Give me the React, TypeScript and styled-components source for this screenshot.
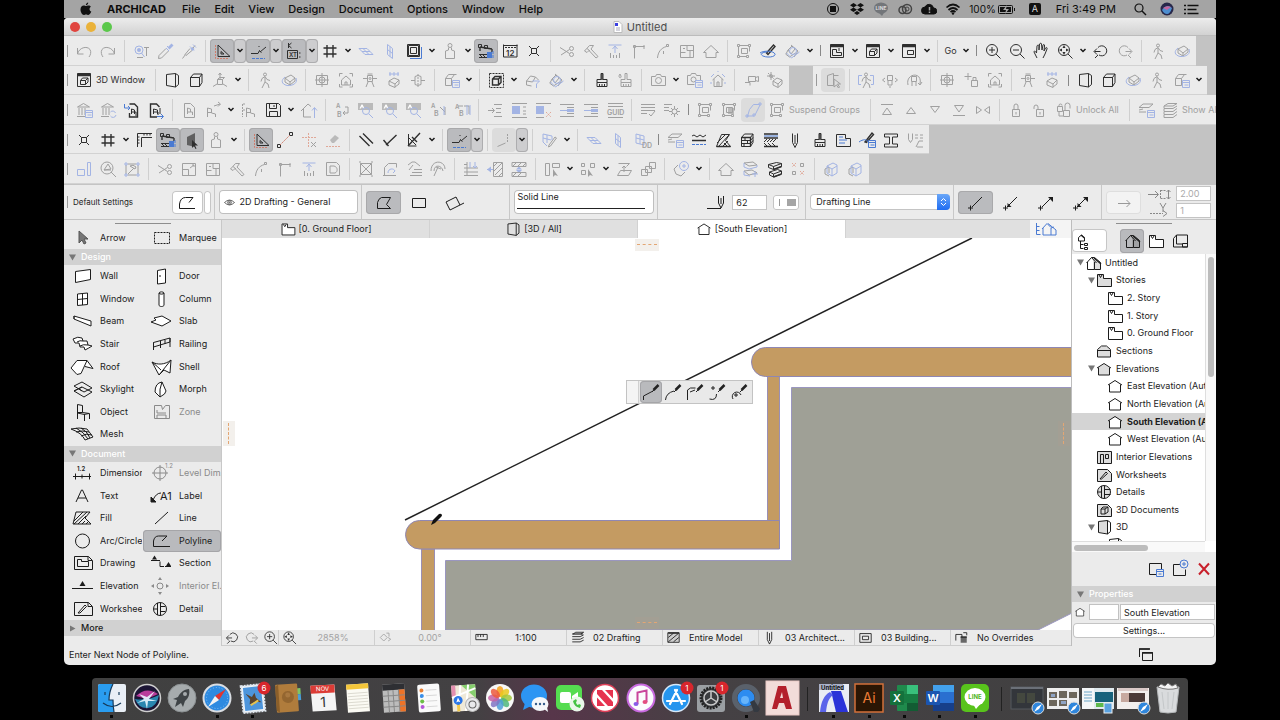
import React from 'react';
import styled, { createGlobalStyle, css } from 'styled-components';

const Global = createGlobalStyle`
  *, *::before, *::after { box-sizing: border-box; }
  body { margin: 0; background: #000; font-family: Inter, "Liberation Sans", sans-serif; font-size: 9px; line-height: 12px; color: #1c1c1c; }
  button, input, select { font: inherit; color: inherit; margin: 0; padding: 0; border: 0; background: none; }
  ul, nav, h2 { margin: 0; padding: 0; list-style: none; font: inherit; }
  svg { display: block; flex: none; }
`;

/* ---------- glyph library ---------- */

/* s line, k bold line, b accent line, f solid, h accent solid, r red line, d dashed line,
   w white body, g pale body, m mid-grey body, e dashed accent line, t letters */
type Glyph = {
  w?: string; g?: string; m?: string; s?: string; k?: string; b?: string; f?: string; h?: string; r?: string; d?: string; e?: string;
  t?: [string, number, number, number][];
};

const ring = (x: number, y: number, r: number) => `M${x - r} ${y}a${r} ${r} 0 1 0 ${2 * r} 0a${r} ${r} 0 1 0 ${-2 * r} 0`;
const box = (x: number, y: number, w: number, h: number) => `M${x} ${y}h${w}v${h}h${-w}z`;

const PERSON = ring(12, 6.5, 1.5) + 'M12 8.5l-3 2-1 3M12 8.5l2 3 3 1M12 9v5l3 2 1 4M12 14l-3 6';
const CUBE = 'M6.500 9.500l3-3.500h8.500l-2.500 3.500zM6.500 9.500h9v9h-9zM15.500 18.500l2.500-4V6';
const ROOM = 'M6.500 6.500l9-1 3 2v9l-3 2.500-9-1.500zM15.500 5.500v13.500';
const STORY = 'M5.500 6.500h6v4h8v8h-14zM7 7l1.500 2.500L10 7';
const LENS = ring(11, 11, 5.5) + 'M15 15l4.500 4.500';
const HOUSE = 'M4.500 13.500l7.500-7 7.500 7h-2.500v5h-10v-5z';
const GABLE = 'M5 11l7-4.500 7 4.500M6.500 10.500v7.500h11v-7.500';
const GROUP = box(5.5, 5.5, 2, 2) + box(16.5, 5.5, 2, 2) + box(5.5, 16.5, 2, 2) + box(14.5, 16.5, 2, 2) + 'M7.500 6.500h9M6.500 7.500v9M7.500 17.500h7M17.500 7.500v5' + box(9.5, 9.5, 6, 5);
const SCISSORS = ring(16.5, 15.5, 2) + ring(16.5, 9.5, 2) + 'M14.500 14.500L5 8.500M14.500 10.500L6 16';
const BRUSH = 'M12 5.500h2v6h4v3h-10v-3h4zM8 14.500v4h10v-4M10.500 16v2M13 16v2M15.500 16v2';
const CAMERA = 'M5.500 8.500h4l1-2h4l1 2h4v9h-14z' + ring(12.5, 12.5, 3);
const BADGE = box(13.5, 12.5, 7, 7) + 'M13.500 14.500h7M15.500 17h4';
const ORBIT = 'M8 10l6-3 4 3-5 4zM8 10v4l5 3v-3M18 10v3l-5 4';
const ORBIT_B = 'M8 9C4 12 4 16 10 17.500C16 18 21 15 19 10';
const PARALLEL = 'M5 9.500h8l6 6h-8zM9 9.500l6 6M8 12.500h8';
const UPRIGHT = 'M9.500 5.500l5 4v10l-5-4zM12 7.500v10M9.500 10.500l5 4';
const ARC = 'M6.500 19C7 13 10 9 15.500 7.500' + box(15.5, 5.5, 2, 2) + 'M12.500 12v3';
const TRISTAR = 'M8 11l4-4 3 3-4 5zM5.500 15l4 3 6-4M11 6l7 6-4 6M8 11l-2 4';
const PAPER = 'M7.500 5.500h6l4 4v10h-10z';
const LOCKBODY = box(8.5, 11.5, 7, 7) + 'M12 14v2.500';
const TEMPLE = 'M5.500 9l6-3.500 6 3.500zM7 10v7M10 10v7M13 10v7M5 18.500h8';

const G: Record<string, Glyph> = {
  undo: { s: 'M5.500 9v6h6M5.500 15C7 8.500 15 6.500 18 10.500C19.500 13 18.500 16 17 18' },
  redo: { s: 'M18.500 9v6h-6M18.500 15C17 8.500 9 6.500 6 10.500C4.500 13 5.500 16 7 18' },
  findsel: { b: ring(10, 11, 4) + 'M12.500 14l3 4', h: ring(10, 11, 2), s: 'M15 8.500h5M17.500 9v8M8 18.500h6' },
  pipette: { b: 'M14 7l3 3M13 9l3 3', h: 'M14.500 8.500l4-4 2 2-4 4z', s: 'M13 9.500l-7 7-.5 3 3-.5 7-7' },
  syringe: { b: 'M13 7.500l4 4M16 5.500l3 3', h: 'M13.500 10l2-2 2 2-2 2z', s: 'M13 9.500l-5 6 1 1 6-5M8.500 15.500l-3 4M16 9l2-2.500' },
  setsq: { s: 'M8 6V17.500H20zM11 12.500v2.500h3z', r: 'M5.500 6v13.500H19' },
  snap: { s: 'M5 14.500h7l1.500-3M13 11.500l2.500 2M14 13l6-5M13 8v-1', e: 'M6 19.500h13' },
  xybox: { s: box(5.5, 11.5, 10, 8) + 'M6.500 4v5M6.500 6.500l3-2.500M6.500 6.500l3 2.500M17 14h1.500M17 18h1.500', t: [['XT', 7, 18, 6]] },
  grid: { k: 'M9 6v12.500M15 6v12.500M5.500 9h13M5.500 15h13' },
  plane: { b: PARALLEL },
  upright: { b: UPRIGHT },
  planeDD: { b: 'M6 6l8 2v9l-8-2zM10 7v9M6 10l8 2', t: [['DD', 12, 20, 7]] },
  frame: { b: 'M8 19.500h11.500V8', s: box(5.5, 5.5, 12, 12) + box(6.5, 6.5, 10, 10) + box(8.5, 8.5, 6, 6) },
  weight: { s: ring(12, 6.5, 2) + 'M10.500 8.500v2.500l-3 1v7.500h9v-7.500l-3-1v-2.500' },
  bridge: { k: 'M6 8l12 2M6 8v4M18 10v3', s: box(4.5, 5.5, 3, 3) + box(10.5, 6.5, 3, 3) + 'M5 15.500h8M5 18.500h8M6 16l2 2M9 16l2 2', h: 'M13 13h5v6h-5z', e: 'M19 12v8' },
  ruler: { s: 'M5.500 5.500v12.500h13.500V5.500M5.500 6.500h14', d: 'M7 8.500h12', t: [['12', 8, 17, 8]] },
  cross: { s: 'M7 7l2.500 2.500M17 7l-2.500 2.500M7 17l2.500-2.500M17 17l-2.500-2.500' + box(9.5, 9.5, 5, 5) },
  scissors: { s: SCISSORS },
  hammer: { s: 'M5.500 12l5-5.500h4l-2.500 3.500 7 7.500-2 1.500-7-7.500-2 2zM8 9.500l3 2.500' },
  comb: { b: 'M5.500 6h13M12 8v6M9.500 10l2.500-3 2.500 3', s: 'M7.500 14v5M10.500 16v3M13.500 16v3M16.500 14v5' },
  corner: { s: 'M7.500 19.500V7.500h10' + box(6.5, 6.5, 2, 2) + 'M17 6v4' },
  fillet: { s: ARC },
  floorsplit: { s: box(5.5, 6.5, 13, 12) + 'M12 6.500v5h6.500M5.500 13.500h5M15 12v7M8 9.500h2' },
  home: { s: HOUSE },
  group: { s: GROUP },
  editpen: { b: 'M4 14c4-3 14-2 15 1s-8 4-12 2 0-4 4-4', k: 'M10.500 14l7-8 1.500 1.500-7 8z' },
  trace: { s: TRISTAR, b: ring(13, 12, 3.5) + 'M6.500 14l5 5 8-6' },
  winplan: { k: 'M5 6.500h14M5 7.500h14', s: box(5.5, 5.5, 13, 13) + 'M7.500 10.500h4v3h5v3h-9zM14 9v3' },
  wincube: { k: 'M5 6.500h14M5 7.500h14', s: box(5.5, 5.5, 13, 13) + 'M8.500 12.500l2-2.500h5.500l-2.500 2.500zM8.500 12.500v4h5v-4M13.500 16.500l2.500-2.500v-4' },
  winlayout: { k: 'M5 6.500h14M5 7.500h14', s: box(5.5, 5.5, 13, 13) + box(10.5, 11.5, 6, 4) },
  zoomin: { s: LENS + 'M11 8v6M8 11h6' },
  zoomout: { s: LENS + 'M8 11h6' },
  hand: { s: 'M8 19l-3-6c0-1.500 1.500-1 2.500 1l.5-7c.5-1.500 2-1 2 0v4l.5-6c.5-1 2-1 2 0l.5 6 1-5c.5-1 2-.5 1.500 1l-.5 5 1.500-3c.8-1 2-.5 1.500 1l-2 5-2 4' },
  zoomfit: { s: LENS, f: 'M11 6l1.500 3h-3zM11 16l1.500-3h-3zM6 11l3-1.500v3zM16 11l-3-1.500v3z' },
  zoomprev: { s: 'M9 8.500a5 5 0 1 1 1 7.500M9 16l-3 3M5.500 12.500h6M8 9.500l-3 3 3 3' },
  zoomnext: { s: 'M15 8.500a5 5 0 1 0-1 7.500M15 16l3 3M12.500 12.500h6M16 9.500l3 3-3 3' },
  walk: { s: PERSON },
  orbit: { s: ORBIT, b: ORBIT_B },
  room: { s: ROOM },
  cube: { s: CUBE },
  axes: { s: box(9.5, 11.5, 5, 5) + 'M12 11V5M10.500 7L12 5l1.500 2M9 16l-4 2.500M15 16l4 2.500M9.500 11.500l2-2h5l-2 2' },
  target: { s: box(6.5, 7.5, 11, 9) + 'M12 5v14M5 12h14' + ring(12, 12, 3) },
  bracketHome: { s: 'M5.500 8.500v-3h3M15.500 5.500h3v3M18.500 16v3h-3M8.500 19h-3v-3M7.500 12l4.500-4 4.500 4v5h-9zM11 17v-3h2v3' },
  tripod: { s: box(9.5, 7.5, 5, 6) + 'M9.500 6h5M5 10.500h4M15 10.500h4M10 14l-2 5M14 14l2 5' + ring(12, 10.5, 1) },
  rays: { b: 'M7 6h10M8 4v4M12 4v4M16 4v4', s: 'M7 13l5-3 5 2-4 4zM7 13v4l6 2.500v-3.500M17 12v4l-4 3' },
  flip: { s: 'M9 8.500q3-2 6 0v8q-3 2-6 0zM5 12.500h4M15 12.500h4', d: 'M12 6v13' },
  cubelist: { s: 'M6.500 10.500l3-4h8M6.500 10.500h6v7h-6zM12.500 10.500l3-4', b: BADGE },
  cubemarq: { d: box(5.5, 5.5, 14, 14), k: 'M8.500 11l2.500-2.500h6v6L14.500 17h-6zM8.500 11h6v6M14.500 11L17 8.500' },
  filter3d: { s: 'M6.500 13l4-5 5 1-3 5zM6.500 13v4l5 1M15.500 9l3 3', b: 'M12.500 13h7l-3 3v4' },
  brush: { k: 'M13 5v7', s: BRUSH },
  dropbrush: { s: BRUSH + 'M7 6c-3 4 2 5 1 2z' },
  camera: { s: CAMERA },
  cameralist: { s: 'M5.500 7.500h3l1-2h4l1 2h4v5M5.500 7.500v9h7' + ring(11.5, 11.5, 2.5), b: BADGE },
  homeflash: { s: 'M6.500 12l5.500-5 5.500 5M8 11v7.500h8V11M11 18v-4h2v4', b: 'M5 9l3-3M19 9l-3-3M12 4v-1M6 15h-2M20 15h-2' },
  videocam: { s: 'M9.500 8.500h7v5h-7zM16.500 9.500l3-1v5l-3-1M6 14.500h5v3' },
  suncube: { s: 'M10 13l4-3 5 2-4 4zM10 13v4l5 2.500v-3.500M19 12v4l-4 3.500' + ring(8, 8, 1.5), d: 'M8 4v8M4 8h8M5 5l6 6' },
  cursorbox: { s: 'M6.500 7.500l6-2v12h-6zM12.500 7.500h5M13 11v8l2.500-2 2 3 1-1-2-3h3z' },
  walkframe: { s: PERSON, b: 'M8 7.500H4.500v9H7M16 7.500h3.500v9H17' },
  dolly: { s: box(9.5, 7.5, 5, 5) + 'M10 13v4h4v-4M7 10l-2.500 2L7 14M17 10l2.500 2-2.500 2M11 19h2' },
  orbitcam: { s: box(9.5, 8.5, 5, 5) + 'M6 17c-3-12 15-14 12-1M16 15l2 2 2-3M10 14v4M14 14v4' },
  sparklock: { s: box(12.5, 12.5, 6, 6) + 'M14 12.500v-3h3v3M9 5v7M5.500 8.500h7' },
  temple: { s: TEMPLE, b: BADGE },
  templesync: { s: TEMPLE, b: 'M14.500 14a3 3 0 0 1 5 1M20 17a3 3 0 0 1-5.500 1' },
  hotlink1: { k: 'M9.500 6h5l3 3v10h-8v-4', b: 'M4.500 6v4h5M8 8l2 2-2 2', s: 'M11.500 16v-5l3 1v4M11 14h5v4' },
  hotlink2: { k: 'M13 19H6.500V6h6l3 3', b: 'M13 18.500h6M17 16l2.500 2.500L17 21', s: 'M9.500 16v-5l4 1v4M9 14h5v3M16 10v6' },
  paperchair: { s: PAPER + 'M10.500 16v-6l3 1v3h2v3M10.500 14h3' },
  chairout: { s: 'M6.500 19v-9l4 1v4l4 1v3M6.500 14.500h4M13 8l6-2M17 4l2.500 2L17 8.500' },
  chairlist: { d: 'M5.500 6v13', s: 'M9.500 19v-9l4 1v4l4 1v3M9.500 14.500h4M6 6h2M6 12h2' },
  floppy: { s: 'M5.500 5.500h12l2 2v11h-14zM8.500 5.500v5h7v-5M8.500 18.500v-5h8v5M13 7v2' },
  upload: { s: 'M4 13l7-7 3 2.500M14 19H6.500v-8', b: 'M17.500 20v-10M15 12.500l2.500-3 2.500 3' },
  ab1: { s: 'M15 9h3v6h-5M15 13l-2 2 2 2', t: [['A', 6, 10, 6], ['B', 7, 19, 7]] },
  abfind: { m: box(4, 5, 15, 7), b: ring(12, 13, 3.5) + 'M15 16l4 4', w: 'M5.500 10.500l2-4h1l2 4h-1.500l-1-2-1 2z' },
  ab2: { s: 'M14 9l5 5M19 9v8', b: 'M18 8v9', t: [['A', 5, 10, 6], ['B', 8, 18, 7]] },
  ab3: { s: 'M14 8h5v8M8 8h5', b: 'M17 7v10M20 7v10', t: [['A', 5, 11, 6], ['B', 9, 18, 7]] },
  indent: { s: 'M5 12.500h6M9 10l2.500 2.500L9 15M11 6.500h8M13 10.500h5M13 14.500h5M11 18.500h8' },
  paratop: { s: 'M5 5.500h15M5 19.500h15M16 9h3M16 13h3M16 16h3', h: box(5, 8, 8, 8) },
  paradel: { s: 'M5 5.500h15M5 19.500h8', h: box(5, 8, 8, 8), r: 'M15 14l5 5M20 14l-5 5' },
  parain: { s: 'M5 6.500h14M12 9.500h7M12 15.500h7M5 18.500h14', b: 'M5 12.500h8', h: box(12, 11, 7, 3) },
  guid: { s: 'M5 5.500h15M5 8.500h15M5 19.500h15', t: [['GUID', 4, 17, 7]] },
  listcheck: { s: 'M5 6.500h14M5 9.500h14M5 12.500h14M5 15.500h6M13 16l2 2 4-5' },
  listgear: { s: 'M4 6.500h8M4 9.500h5M4 12.500h5M14.500 8v3M14.500 16v3M9 13.500h3M17 13.500h3M11 10l2 2M16 15l2 2M18 10l-2 2M11 17l2-2' + ring(14.5, 13.5, 2.5) },
  groupfill: { s: GROUP, m: box(11, 10, 6, 6) },
  blueGroup: { b: 'M6.500 18.500l2-7 4-5h6M19 7l-5 10M6 18h7' + box(12, 16, 2, 2) + box(5, 17, 2, 2) + box(18, 5, 2, 2) },
  top: { s: 'M6 6.500h12M7.500 16.500L12 10l4.500 6.500z' },
  up: { s: 'M7.500 15.500L12 9.500l4.500 6z' },
  down: { s: 'M7.500 8.500L12 14.500l4.500-6z' },
  bottom: { s: 'M6 17.500h12M7.500 7.500L12 14l4.500-6.500z' },
  mirror: { s: 'M5.500 8.500v7l5-3.500zM18.500 8.500v7l-5-3.500z' },
  lock: { s: LOCKBODY + 'M10 11.500V8a2 2 0 0 1 4 0v3.500' },
  unlock: { s: LOCKBODY + 'M10 11.500V9a2 2 0 0 0-4 0v2' },
  unlockall: { s: box(11.5, 12.5, 6, 6) + box(5.5, 8.5, 5, 5) + 'M7 8.500v-1a1.500 1.500 0 0 1 3 0M13 12.500v-5a2 2 0 0 1 5 0v3M7 14v4h4' },
  layers: { s: 'M5 9.500l4-3.500h10l-4 3.500zM5 12l4-1M5 14h7', b: BADGE },
  stack: { s: 'M6 8l4-2.500h9L15 8zM6 8v2.500h9L19 8M6 11v2.500h9l4-3M6 14v2.500h9l4-3M6 17v2.500h9l4-3' },
  rulercorner: { s: 'M5.500 19V5.500H20M9.500 19V9.500H20M5.500 9h2M5.500 12h2M5.500 15h2M12 5.500v2M15 5.500v2M18 5.500v2' },
  wallcursor: { m: 'M7 9l8-4v14l-8-2z', f: 'M12 12v8l2-2 1.500 3 1-.5-1.500-3h3z' },
  guideline: { r: 'M7 17L17 7', s: box(16.5, 4.5, 3, 3) + box(4.5, 16.5, 3, 3) },
  guidecross: { r: 'M11.500 5v14M5 9.500h14', s: 'M14 14l5 5M19 14l-5 5' },
  eraser: { r: 'M5 18.500h14', m: 'M9 12l5-5 4 3-5 5h-2z' },
  par: { k: 'M5.500 8l10 10M9 5.500l10 10' },
  perp: { k: 'M5.500 12l5 6M8 17L18.500 7' },
  bisect: { s: 'M6.500 6v12h8M7 10l7 7', k: 'M6 18L18 5M10 9l5 5' },
  axis: { s: 'M5.500 18.500l8-3.500', d: 'M15.500 6v9' },
  planepen: { b: 'M6 6l9 2v4M6 6v8l4 4M10 7v8M6 10l8 2', s: 'M12 17l6-8 1.500 1-6 8-2 1z' },
  waves: { s: 'M5 8l2-1 3 2 3-2 3 2 3-2', k: 'M5 12.500h14', e: 'M5 16.500h14' },
  hatchpoly: { s: 'M5.500 18.500l5-12h8l-4 6 5 6zM8 18l10-11M12 18l5-5M6 15l9-9M16 18l-3-3', k: 'M5.500 18.500h14' },
  brick: { s: CUBE + 'M6.500 12.500h9M6.500 15.500h9M10 9.500v3M12.500 12.500v3M9 15.500v3M15.500 12.500l2.500-3M15.500 15.500l2.500-3', k: 'M6.500 9.500h9v9' },
  composite: { k: 'M5 6h14M5 10h14M5 18.500h14', b: 'M5 8h14', s: 'M5 14l3-3M8 14l3-3M11 14l3-3M14 14l3-3M5 15l3 3M9 15l3 3M13 15l3 3' },
  pen: { s: 'M9.500 5.500v9l2.500 5 2.500-5v-9M12 16v-9' },
  storyblue: { s: 'M5.500 6.500h9v4h5v8h-14z', b: 'M8 9h4M8 12h8M8 15h6' },
  penlist: { b: 'M4 14c4-3 8-3 9 0' + BADGE, k: 'M10 14l7-9 1.500 1.500-7 8z' },
  ibeam: { s: 'M5.500 6h13v3h-5v7h5v3h-13v-3h5V9h-5z' },
  penmulti: { s: 'M5.500 5.500v6l2 3 2-3v-6M12 7h3M17 7h3M12 10h3M17 10h3M13 19l3-6h4M14 19h6' },
  resizeb: { b: box(5.5, 12.5, 7, 6) + box(15.5, 5.5, 3, 13) },
  lensplay: { s: ring(11, 11, 6) + 'M15 15l5 5M8 13l4-6 3 5zM8 13h7' },
  nodehammer: { b: box(5, 6, 2, 2) + box(17, 6, 2, 2) + box(17, 17, 2, 2) + box(5, 17, 2, 2), s: 'M7.500 7h9M18 8v9M7.500 18h9M6 8v9M8 17l6-6M10 9q3-2 6 1l-1 2z' },
  resize: { s: box(5.5, 6.5, 13, 12) + box(5.5, 12.5, 6, 6) + 'M13 11l4-3M15 8h2v2' },
  rounded: { s: 'M5.500 5.500h10l3 3v10h-13zM9 9h4c4 1 4 6 1 7H9z' },
  crossbox: { s: box(6.5, 6.5, 11, 11) + 'M6.500 6.500l11 11M17.500 6.500l-11 11M5 5h2M17 5h2M5 19h2M17 19h2' },
  polymagic: { s: 'M6.500 18.500v-8l4-4h8v4M5 18.500h13', b: 'M10 16c0-5 6-5 7-2l-2 2' },
  hammerlist: { s: 'M6 8l4-3h3l5 4M11 8l-4 5M12 12.500h8M10 15.500h10M8 18.500h12' },
  hammerarc: { s: 'M5 14c0-12 14-11 14-2M8 14c0-7 8-6 9 0M12 10l-4 9M10 10l5 2' },
  dropdown1: { s: 'M5 7.500h3M5 11h14M5 15h14M5 18.500h14M8 5v14', b: 'M16 5v6M14 9l2 2 2-2M11 5v6' },
  hatchside: { s: 'M10.500 5.500h9v14h-9zM11 9l4-4M11 14l8-8M12 18l7-7M16 19l3-3', b: 'M4 12.500h6', h: 'M4 12.500l4-3v6z' },
  hatchvert: { s: 'M5 5.500h14v4H5zM5 15.500h14v4H5zM6 9l3-3M11 9l3-3M16 9l3-3M6 19l3-3M11 19l3-3', h: 'M12 9.500l3 3h-6zM12 16l3-3h-6z' },
  alignsel: { s: box(5.5, 6.5, 4, 12) + box(12.5, 6.5, 7, 4), f: 'M13 12v8l2-2 3 1z' },
  distsel: { s: box(5.5, 6.5, 3, 3) + box(14.5, 6.5, 4, 4) + box(5.5, 13.5, 4, 4), f: 'M12 12v8l2-2 3 1z' },
  planeup: { s: 'M6.500 6.500h11l-3 3M5.500 18.500l3-5h11l-3 5zM12 15v-6M10 11l2-2 2 2' },
  squares: { s: box(5.5, 12.5, 6, 6) + box(9.5, 9.5, 6, 6) + box(13.5, 5.5, 6, 6) },
  lampplus: { b: ring(15, 9, 4.5) + 'M15 7v4M13 9h4', s: 'M9 8l-4 4 2 5 5 2 4-4' },
  slabadd: { s: 'M6 6l9-1 4 3-8 1zM6 14l8-1 5 3-8 2z', b: 'M6 6v4l5 2 8-2v-2M6 14v4l6 1M17 14v6M14 17h6' },
  slabk: { s: 'M6.500 7.500l8-2 5 1-8 3zM6.500 7.500v3l5 2M11.500 9.500v3l8-3v-3M7.500 15l8-2.500 4 1.500-8 3zM7.500 15v3l4 2v-3M11.500 20l8-3v-3', k: 'M11.500 12.500l8-3M11.500 20l8-3' },
  xo: { r: 'M6 6l4 4M10 6l-4 4M14 14l4 4M18 14l-4 4', s: box(14.5, 6.5, 3, 3) + box(6.5, 14.5, 3, 3) },
  ghost: { b: 'M8 9l6-3 4 2v8l-5 3-5-3zM8 9l5 3 5-3M13 12v7', s: 'M6 12l4-2v6M6 12v5l4 2' },
  /* info bar */
  poly: { s: 'M20 17.500H4.500V13q1-6.500 6-6.500H18l-4 5' },
  polyfill: { s: 'M5.500 17.500h13l-4-4 4-7h-9q-3 1-4 5z' },
  rect: { s: box(5.5, 7.5, 13, 9) },
  rotrect: { s: 'M4 11l10-5 4 8-10 5zM18 14l4-2' },
  eye: { s: 'M4 12q8-8 16 0q-8 8-16 0z' + ring(12, 12, 3) + ring(12, 12, 1) },
  penflat: { s: 'M3 18.500h14M14.500 6v7l2.500 5 2.500-5V6M17 8v6' },
  seg0: { s: 'M8 16L18 6M4 17h5M6.500 14.500v5' },
  seg1: { s: 'M8 16L18 6M4 17h5M6.500 14.500v5', f: 'M8.500 12v4h4z' },
  seg2: { s: 'M8 16L17 7M4 17h5M6.500 14.500v5', f: 'M14 6h5v5z' },
  seg3: { s: 'M8 16L17 7M4 17h5M6.500 14.500v5', f: 'M14 6h5v5zM8.500 12v4h4z' },
  arrowR: { s: 'M6 12.500h12M14.500 9l3.500 3.500L14.500 16' },
  /* navigator and tabs */
  story: { w: 'M5.500 6.500h6v4h8v8h-14z', s: STORY },
  storyfill: { g: 'M5.500 6.500h6v4h8v8h-14z', s: STORY },
  house: { w: 'M6.500 10.500L12 7l5.500 3.500v7.500h-11z', s: GABLE },
  housefill: { g: 'M6.500 10.500L12 7l5.500 3.500v7.500h-11z', s: GABLE },
  section: { g: 'M5.500 11l4-3.500h5l4 3.500v7h-13z', s: 'M5.500 10.500l4-3.500h5l4 3.500v7.500h-13zM5.500 11.500h13' },
  roombox: { s: ROOM },
  roomfill: { g: 'M6.500 6.500l9-1v13l-9-1.500z', s: ROOM },
  project: { g: 'M12 7l7 6v5h-7z', s: 'M5.500 12l5-5.500 5 5.500M6.500 11v7.500h7V11M10.500 6.500h3l6 5v7h-6', k: 'M13 7l7 6' },
  interior: { g: box(5.5, 6.5, 14, 12), s: box(5.5, 6.5, 14, 12) + box(8.5, 9.5, 3, 9) + box(13.5, 9.5, 3, 4) },
  worksheet: { g: 'M5.500 6.500h10l4 4v8h-14z', s: 'M5.500 6.500h10l4 4v8h-14zM8 16l6-7 1.500 1.500L9.500 16z' },
  detail: { g: ring(12, 12, 6.5), s: ring(12, 12, 6.5) + 'M9.500 6v12M12.500 6v12M12.500 9.500h6M12.500 14.500h6M6 12h4' },
  doc3d: { g: 'M5.500 6.500h10l4 4v8h-14z', s: 'M5.500 6.500h10l4 4v8h-14zM9 11h4v5H9zM9 11l2-2h5l-3 2M16 9v5l-3 2' },
  navtree: { s: 'M6.500 8.500l3-2.500 3 3v3h-6zM8.500 12v7.500M8.500 15.500h3M8.500 19.500h3' + box(12.5, 14.5, 3, 2) + box(12.5, 18.5, 3, 2), k: 'M9 6l3.500 3' },
  navbooks: { s: 'M5.500 9.500l3-3.500v9M8.500 6h11v12h-14V9.500M8.500 15h6' + box(14.5, 14.5, 5, 3.5) },
  navhouse: { b: 'M2.500 6v11.500h4M2.500 9.500h3M2.500 13.500h3M8 12l5-5.500 4 4M9 11v7h13v-5l-8-6.500M17 18v-7l3-1' },
  viewsettings: { s: 'M13 17.500H5.500v-11h12v6', b: box(12.5, 12.5, 7, 7) + 'M12.500 14.500h7M14.500 17h3' },
  newview: { s: 'M12 7.500H5.500v11h12v-6', b: ring(16, 7, 4) + 'M16 5v4M14 7h4' },
  windows: { s: 'M5.500 14v-8h10' + box(8.5, 9.5, 10, 8), k: 'M5 6h11M8 10h11' },
  /* view bar */
  rotview: { s: 'M6 12l4-4 4 4-4 4zM13 7h3v4M15 12l3 2-3 2' },
  scale: { s: box(5.5, 8.5, 13, 6) + 'M8 8.500v3M11 8.500v3M14 8.500v3' },
  layersd: { k: 'M6 8h12', s: 'M7 8l3-2h9l-3 2M6 11h9l4-2M6 14h9l4-2M6 17h9l4-2' },
  hatchbox: { g: box(6, 7, 12, 10), s: box(5.5, 6.5, 13, 11) + 'M6 12l6-5M6 17l12-10M12 17l6-5', k: 'M6 7h12' },
  mvo: { s: box(5.5, 7.5, 13, 10) + box(8.5, 10.5, 7, 4) },
  override: { s: 'M5.500 15.500v-7h7v3M14 6.500h4v3', m: box(11, 11, 7, 7), k: 'M11 11.500h7' },
};

const GlyphSvg = ({ name, size = 24 }: { name: string; size?: number }) => {
  const g = G[name] ?? {};
  return (
    <svg width={size} height={size} viewBox="0 0 24 24" fill="none" stroke="currentColor" strokeWidth={1} aria-hidden="true">
      {g.g && <path d={g.g} fill="currentColor" fillOpacity={0.15} stroke="none" />}
      {g.m && <path d={g.m} fill="currentColor" fillOpacity={0.65} stroke="none" />}
      {g.w && <path d={g.w} fill="#fff" stroke="none" />}
      {g.h && <path d={g.h} fill="var(--accent)" stroke="none" />}
      {g.s && <path d={g.s} />}
      {g.k && <path d={g.k} strokeWidth={1.4} />}
      {g.b && <path d={g.b} stroke="var(--accent)" />}
      {g.e && <path d={g.e} stroke="var(--accent)" strokeDasharray="3 1" />}
      {g.d && <path d={g.d} strokeDasharray="2 1" />}
      {g.r && <path d={g.r} stroke="var(--warm)" strokeDasharray="2 1" />}
      {g.f && <path d={g.f} fill="currentColor" stroke="none" />}
      {g.t?.map(([s, x, y, fs]) => (
        <text key={s} x={x} y={y} fontSize={fs} fontWeight={600} fill="currentColor" stroke="none">{s}</text>
      ))}
    </svg>
  );
};

/* ---------- desktop & menu bar ---------- */

const Desktop = styled.div`
  --accent: #4a7ad2;
  --warm: #cf7d6c;
  height: 100vh;
  min-height: 640px;
  padding: 0 5%;
  display: flex;
  flex-direction: column;
  background: #000;
`;

const MenuBar = styled.nav`
  height: 18px;
  flex: none;
  display: flex;
  align-items: center;
  gap: 14px;
  padding: 0 17px 0 15px;
  background: #a4a4a4;
  color: #0c0c0c;
  font-size: 11px;
  font-weight: 500;
  white-space: nowrap;
`;

const MenuItem = styled.button<{ $bold?: boolean }>`
  font-weight: ${p => (p.$bold ? 700 : 500)};
  margin-right: ${p => (p.$bold ? 2 : 0)}px;
`;

const MenuExtras = styled.div`
  margin-left: auto;
  display: flex;
  align-items: center;
  gap: 8px;
  font-weight: 400;
`;

const Battery = styled.span`
  display: flex;
  align-items: center;
  gap: 1px;
  font-size: 10px;
`;

const Clock = styled.span`
  margin: 0 8px 0 7px;
`;

const SiriSlot = styled.span`
  margin-left: 3px;
`;

const InputSource = styled.span`
  width: 12px;
  height: 12px;
  margin-left: 5px;
  border-radius: 2px;
  background: #111;
  color: #ddd;
  font-size: 9px;
  text-align: center;
`;

/* ---------- window chrome ---------- */

const Window = styled.main`
  flex: 1;
  display: flex;
  flex-direction: column;
  min-height: 0;
  overflow: hidden;
  border-radius: 4px 4px 5px 5px;
  background: #ebebeb;
`;

const TitleBar = styled.header`
  height: 18px;
  flex: none;
  position: relative;
  display: flex;
  align-items: center;
  justify-content: center;
  gap: 4px;
  background: linear-gradient(#ececec, #d2d2d2);
  border-bottom: 1px solid #bcbcbc;
  font-size: 11px;
  color: #4c4c4c;
`;

const Lights = styled.div`
  position: absolute;
  left: 6px;
  top: 4px;
  display: flex;
  gap: 6px;
`;

const Light = styled.button<{ $c: string }>`
  width: 10px;
  height: 10px;
  border-radius: 50%;
  background: ${p => p.$c};
`;

const ToolbarArea = styled.div`
  height: 148px;
  flex: none;
  display: grid;
  grid-auto-rows: 1fr;
  background: #c3c3c3;
`;

const ToolbarRow = styled.div`
  display: flex;
  gap: 24px;
  min-width: 0;
  overflow: hidden;
`;

const Strip = styled.div`
  display: flex;
  align-items: center;
  padding: 1px 2px 0 0;
  background: #ebebeb;
  border-bottom: 1px solid #d2d2d2;
`;

type Look = 'plain' | 'dim' | 'active' | 'ghost';

const ToolButton = styled.button<{ $look: Look; $w?: number }>`
  width: ${p => p.$w ?? 24}px;
  height: 24px;
  flex: none;
  display: flex;
  align-items: center;
  white-space: nowrap;
  border-radius: 4px;
  color: #2f2f2f;
  ${p => (p.$look === 'dim' || p.$look === 'ghost') && css`color: #a0a0a0; --accent: #a3b4e4; --warm: #e0a898;`}
  ${p => p.$look === 'active' && css`background: #babbbe; box-shadow: inset 0 0 0 1px #a9a9ab;`}
  ${p => p.$look === 'ghost' && css`background: #dcdcdc;`}
`;

const Chevron = styled.button<{ $on?: boolean }>`
  width: 12px;
  height: 24px;
  flex: none;
  display: grid;
  place-items: center;
  border-radius: 4px;
  ${p => p.$on && css`background: #cdcdcf; box-shadow: inset 0 0 0 1px #adadaf;`}
`;

const Divider = styled.i<{ $handle?: boolean }>`
  width: 9px;
  flex: none;
  height: ${p => (p.$handle ? 11 : 22)}px;
  background: linear-gradient(${p => (p.$handle ? '#888' : '#cfcfcf')} 0 0) center / 1px 100% no-repeat;
`;

const Grip = styled.i`
  width: 8px;
  height: 12px;
  flex: none;
  background: linear-gradient(#999 0 0) 3px 0 / 1px 100% no-repeat;
`;

const LABELLED: Record<string, [string, string, number]> = {
  window3d: ['wincube', '3D Window', 79],
  suspend: ['group', 'Suspend Groups', 101],
  unlockAll: ['unlockall', 'Unlock All', 73],
  showAll: ['stack', 'Show All', 64],
};

/* One string per strip: "name" enabled, "name-" disabled, "name*" pressed, "name~" pressed and disabled,
   "v" / "V" menu arrow, "|" divider, "!" short divider. */
const ROWS: string[][] = [
  ['undo- redo- | findsel- pipette- syringe- | setsq* V snap* V xybox* V grid v plane- upright- frame v weight- v bridge* ruler cross | scissors- hammer- comb- corner- fillet- floorsplit- home- | group- editpen trace- v ! winplan v wincube v winlayout v | go v ! zoomin zoomout hand zoomfit v zoomprev zoomnext- | walk- orbit-'],
  [
    'window3d room cube axes- v | walk- orbit- | target- bracketHome- tripod- rays- flip- | cubelist- v | cubemarq v filter3d- trace- v | brush dropbrush- | camera- v cameralist- homeflash- | videocam- suncube-',
    'cursorbox~ | walkframe- dolly- orbitcam- | target- sparklock- bracketHome- | tripod- rays- ! room cube orbit- walk- cubelist- v',
  ],
  ['temple- templesync- hotlink1 hotlink2 | paperchair- chairout- v chairlist- floppy v upload- | ab1- abfind- abfind- abfind- ab2- ab3- | indent- paratop- paradel- parain- parain- guid- | listcheck- listgear- ! group- groupfill- blueGroup~ suspend- | top- up- down- bottom- mirror- | lock- unlock- unlockAll- | layers- showAll-'],
  ['cross grid v rulercorner bridge* wallcursor* weight- v | setsq* guideline guidecross- eraser- | par perp bisect v | snap* V | axis~ V | planepen- v | plane- upright- planeDD- ! layers- waves hatchpoly brick composite pen brush storyblue penlist ibeam penmulti-'],
  ['resizeb- lensplay- nodehammer- | scissors- resize- floorsplit- hammer- fillet- corner- comb- rounded- | crossbox- polymagic- hammerlist- hammerarc- | dropdown1- hatchside- hatchvert- | alignsel- v distsel- v planeup- squares- | lampplus- v | home- slabadd- slabk xo- | ghost- ghost-'],
];

const LOOKS: Record<string, Look> = { '-': 'dim', '*': 'active', '~': 'ghost' };

const Caret = () => (
  <svg width="8" height="6" viewBox="0 0 8 6" fill="none" stroke="#1a1a1a" strokeWidth="1.500" aria-hidden="true"><path d="M1.500 1L4 3.500 6.500 1" /></svg>
);

const Tool = ({ token }: { token: string }) => {
  if (token === '|') return <Divider />;
  if (token === '!') return <Divider $handle />;
  if (token === 'v' || token === 'V') return <Chevron $on={token === 'V'} aria-label="More options"><Caret /></Chevron>;
  if (token === 'go') return <ToolButton $look="plain" $w={18}>&nbsp;Go</ToolButton>;
  const look = LOOKS[token.slice(-1)] ?? 'plain';
  const name = look === 'plain' ? token : token.slice(0, -1);
  const labelled = LABELLED[name];
  if (labelled) {
    return (
      <>
        <ToolButton $look={look} $w={labelled[2]}><GlyphSvg name={labelled[0]} />{labelled[1]}</ToolButton>
        {name === 'window3d' && <Divider />}
      </>
    );
  }
  return <ToolButton $look={look} aria-label={name}><GlyphSvg name={name} /></ToolButton>;
};

/* ---------- info bar ---------- */

const InfoBar = styled.div`
  height: 36px;
  flex: none;
  display: flex;
  border-top: 1px solid #c4c4c4;
  border-bottom: 1px solid #c4c4c4;
`;

const InfoCell = styled.div<{ $basis?: number; $gap?: number; $end?: boolean; $flush?: boolean }>`
  flex: ${p => p.$basis ?? 148} 1 0;
  min-width: 0;
  display: flex;
  align-items: center;
  justify-content: ${p => (p.$end ? 'flex-end' : 'flex-start')};
  gap: ${p => p.$gap ?? 0}px;
  padding: 0 3px 0 ${p => (p.$flush ? 0 : 4)}px;
  border-right: 1px solid #c8c8c8;
  white-space: nowrap;
  &:last-child { border-right: 0; }
`;

const BoxButton = styled.button<{ $on?: boolean; $w?: number; $flat?: boolean; $dim?: boolean }>`
  width: ${p => p.$w ?? 35}px;
  height: 23px;
  flex: none;
  display: grid;
  place-items: center;
  border-radius: 4px;
  ${p => !p.$flat && css`background: ${p.$on ? '#babbbe' : p.$dim ? '#f3f3f3' : '#fff'}; box-shadow: inset 0 0 0 1px ${p.$on ? '#a9a9ab' : p.$dim ? '#dedede' : '#c6c6c6'};`}
  ${p => p.$dim && css`color: #999;`}
`;

const SettingsLabel = styled.span`
  flex: 1;
  font-size: 8px;
`;

const LayerPicker = styled.button`
  flex: 1;
  height: 24px;
  display: flex;
  align-items: center;
  gap: 3px;
  padding: 0 3px;
  border-radius: 4px;
  background: #fff;
  box-shadow: inset 0 0 0 1px #bfbfbf;
`;

const LineTypePicker = styled.button`
  flex: 1;
  height: 24px;
  padding: 0 9px 4px 3px;
  border-radius: 4px;
  background: #fff;
  box-shadow: inset 0 0 0 1px #bfbfbf;
  text-align: left;
  line-height: 12px;
  &::after { content: ''; display: block; margin-top: 5px; border-top: 1px solid #222; }
`;

const Field = styled.input<{ $dim?: boolean }>`
  width: 35px;
  height: 15px;
  min-width: 0;
  padding: 0 3px;
  background: #fff;
  border: 1px solid #c4c4c4;
  color: ${p => (p.$dim ? '#aaa' : '#222')};
`;

const PenSwatch = styled.button`
  width: 26px;
  height: 15px;
  margin: 0 3px 0 2px;
  border-radius: 3px;
  background: linear-gradient(#a5a5a5 0 0) 14px 4px / 9px 7px no-repeat, linear-gradient(#999 0 0) 6px 4px / 1px 7px no-repeat, #fff;
  box-shadow: inset 0 0 0 1px #c4c4c4;
`;

const SelectWrap = styled.span`
  flex: 1;
  height: 16px;
  display: flex;
  overflow: hidden;
  border-radius: 4px;
  background: #fff;
  box-shadow: inset 0 0 0 1px #c4c4c4;
`;

const Select = styled.select`
  flex: 1;
  min-width: 0;
  padding: 0 6px;
  appearance: none;
`;

const Stepper = styled.span`
  width: 13px;
  display: grid;
  place-items: center;
  background: linear-gradient(#6aa7f8, #1f6df2);
`;

const FieldStack = styled.div`
  display: grid;
  gap: 2px;
`;

/* ---------- work area ---------- */

const Body = styled.div`
  flex: 1;
  min-height: 0;
  display: flex;
`;

const Toolbox = styled.aside`
  width: 158px;
  flex: none;
  display: flex;
  flex-direction: column;
  padding-bottom: 10px;
  border-right: 1px solid #c8c8c8;
`;

const PanelGrip = styled.i`
  height: 6px;
  flex: none;
  background: linear-gradient(#8e8e8e 0 0) center 3px / 56px 1px no-repeat;
`;

const ToolGrid = styled.div<{ $rows: number }>`
  flex: ${p => (p.$rows === 1 ? '0 0 23px' : `${p.$rows} 1 0`)};
  min-height: ${p => p.$rows * 16}px;
  display: grid;
  grid-template-columns: 79px 1fr;
  grid-auto-rows: 1fr;
`;

const PaletteTool = styled.button<{ $on?: boolean; $off?: boolean }>`
  display: flex;
  align-items: center;
  min-width: 0;
  overflow: hidden;
  white-space: nowrap;
  text-align: left;
  border-radius: 4px;
  color: ${p => (p.$off ? '#8a8a8a' : '#1c1c1c')};
  ${p => p.$on && css`background: #b9babd; box-shadow: inset 0 0 0 1px #a5a5a8;`}
`;

const GroupHeader = styled.h2<{ $closed?: boolean }>`
  height: 16px;
  flex: none;
  display: flex;
  align-items: center;
  gap: 5px;
  padding-left: 5px;
  background: #d1d1d1;
  color: ${p => (p.$closed ? '#1c1c1c' : '#fff')};
  font-weight: 500;
`;

const Tri = ({ closed }: { closed?: boolean }) => (
  <svg width="7" height="7" viewBox="0 0 7 7" fill="#777" aria-hidden="true"><path d={closed ? 'M1 0.500L6.500 3.500 1 6.500z' : 'M0 0.500H7L3.500 6.500z'} /></svg>
);

const H: Record<string, React.ReactNode> = {
  Arrow: <path d="M15 4v12l3-3 2 4 2-1-2-4h4z" fill="#777" stroke="#555" />,
  Marquee: <path d="M11.500 5.500h15v11h-15z" strokeDasharray="2 1" />,
  Wall: <path d="M11.500 6.500l15-2v10l-15 3z" fill="#fff" />,
  Door: <path d="M14.500 5.500l8-1.500v14l-8 1zM17 12v-2" fill="#fff" />,
  Window: <path d="M13.500 6l10-1v11.500l-10 1zM18.500 5.500v11.500M13.500 11.500l10-1" fill="#fff" />,
  Column: <path d="M16 5c0-1.500 5-1.500 5 0v12c0 2-5 2-5 0zM16 5c0 1.500 5 1.500 5 0" fill="#fff" />,
  Beam: <path d="M10 6l17 5v5L10 9zM10 6v3" fill="#fff" />,
  Slab: <path d="M8 12l5-2-2-2 8-2 9 5-9 5z" fill="#fff" />,
  Stair: <path d="M9 6q5-3 9-1l1 3 4 0 1 4 4 1q-3 2-7 4l-1-3-4 0-1-4-4-0-1-2zM13 9q3-2 6-1M16 13q3-2 8-1" fill="#fff" />,
  Railing: <path d="M10.500 9.500L27 5v4L10.500 14zM10.500 9.500V17M17.500 8v7M27 5v9M22 7v4" />,
  Roof: <path d="M7 12l6-7.500h10L17 17.500l-4 1zM23 4.500l6 8-8-2" fill="#fff" />,
  Shell: <path d="M9 6c5 3 13 3 19-2l-1 13-6-3-5 5zM28 4L16 19M9 6q6 5 9 8" fill="#fff" />,
  Skylight: <path d="M10 8l8-4 10 6-8 4zM10 13l10 6 8-5-10-5zM10 13l8-4M15 11l3 2" />,
  Morph: <path d="M12 14q0-9 7-10l4 9q0 3-6 6zM19 4q-3 7-2 15" fill="#fff" />,
  Object: <path d="M13.500 18V3.500l5 1v7l7 1V18M13.500 11.500h5M13.500 12l7 1.500V20M20 13.500l5-1" />,
  Zone: <path d="M11.500 4.500h7l1 4 3-4h4v13h-15zM14 9v3h9M14 17v-3h9v3" />,
  Mesh: <path d="M7 6q8-2 16 0l6 8-8 3q-3-7-14-11zM12 5q8 4 12 11M17 5q6 3 9 10M12 9q6-2 13 0M17 13q5-3 11-1" />,
  Dimension: <><path d="M9 14.500h18M11.500 11.500v6M25.500 11.500v6M18 12.500v4" /><text x="13" y="9" fontSize="6" fontWeight="600" fill="currentColor" stroke="none">1.2</text></>,
  'Level Dim.': <><circle cx="17" cy="11" r="6" /><path d="M17 3v16M9 11h16" /><text x="22" y="6" fontSize="6" fill="currentColor" stroke="none">1.2</text></>,
  Text: <path d="M12 17L17.500 5h1L24 17M14 13h8" />,
  Label: <><path d="M10 15q3-7 8-7" /><path d="M8 17v-5l5 5z" fill="currentColor" /><text x="17" y="15" fontSize="11" fill="currentColor" stroke="none">A1</text></>,
  Fill: <path d="M9 17l3-12h14l-5 6 6 6zM10 14L19 5M10 17L23 5M14 17l8-8M18 17l3-3M22 17l2-2" />,
  Line: <path d="M12 17L25 5" />,
  'Arc/Circle': <circle cx="18.500" cy="11" r="7" />,
  Polyline: <path d="M27 16.500H10.500V11q1-5 5-5H24l-5 5" />,
  Drawing: <path d="M10.500 4.500h14l4 4v9h-18zM13.500 7.500h4v2h7v5h-11zM24 4.500v4h4" />,
  Section: <><path d="M8 8.500h9v6h11" strokeDasharray="9 1" /><path d="M9 7.500l2.500-4 2.500 4zM23 14l2.500-4 2.500 4z" fill="currentColor" stroke="none" /></>,
  Elevation: <><path d="M8 13.500h21" /><path d="M15.500 11l3-5 3 5z" fill="currentColor" stroke="none" /></>,
  'Interior El.': <><circle cx="17" cy="11" r="3" /><path d="M15 5l2-3 2 3zM15 17l2 3 2-3zM11 9l-3 2 3 2zM23 9l3 2-3 2z" fill="currentColor" stroke="none" /></>,
  Worksheet: <path d="M10.500 4.500h14l4 4v9h-18zM14 15l7-8 1.500 1.500L16 15zM24 4.500v4h4" />,
  Detail: <path d="M10.500 11a6.500 6.500 0 1 0 13 0a6.500 6.500 0 1 0-13 0M14.500 5v12M17.500 5v12M17.500 8.500h5M17.500 13.500h5M11 11h4" />,
};

const DESIGN = ['Wall', 'Door', 'Window', 'Column', 'Beam', 'Slab', 'Stair', 'Railing', 'Roof', 'Shell', 'Skylight', 'Morph', 'Object', 'Zone', 'Mesh'];
const DOCUMENT = ['Dimension', 'Level Dim.', 'Text', 'Label', 'Fill', 'Line', 'Arc/Circle', 'Polyline', 'Drawing', 'Section', 'Elevation', 'Interior El.', 'Worksheet', 'Detail'];
const UNAVAILABLE = ['Zone', 'Level Dim.', 'Interior El.'];

const ClippedLabel = styled.span`
  width: 42px;
  overflow: hidden;
`;

const Palette = ({ items }: { items: string[] }) => (
  <ToolGrid $rows={Math.ceil(items.length / 2)}>
    {items.map(t => (
      <PaletteTool key={t} $on={t === 'Polyline'} $off={UNAVAILABLE.includes(t)} aria-pressed={t === 'Polyline'}>
        <svg width="36" height="22" viewBox="0 0 36 22" fill="none" stroke="currentColor" aria-hidden="true">{H[t]}</svg>
        <ClippedLabel>{t}</ClippedLabel>
      </PaletteTool>
    ))}
  </ToolGrid>
);

const Stage = styled.section`
  flex: 1;
  min-width: 0;
  display: flex;
  flex-direction: column;
`;

const Tabs = styled.nav`
  height: 18px;
  flex: none;
  display: flex;
  background: #e0e0e0;
`;

const Tab = styled.button<{ $on?: boolean }>`
  width: 208px;
  overflow: hidden;
  display: flex;
  align-items: center;
  justify-content: center;
  padding-right: 3px;
  border-right: 1px solid #d2d2d2;
  background: ${p => (p.$on ? '#fff' : '#e0e0e0')};
`;

const TabMenu = styled.button`
  width: 41px;
  margin-left: auto;
  display: flex;
  justify-content: center;
  align-items: center;
  padding-right: 10px;
  background: #f4f4f4;
`;

const Viewport = styled.div`
  flex: 1;
  min-height: 0;
  position: relative;
  overflow: hidden;
  background: #fff;
`;

const Drawing = styled.svg`
  position: absolute;
  inset: 0;
  width: 100%;
  height: 100%;
`;

const EdgeMark = styled.i<{ $side: 'top' | 'bottom' | 'left' | 'right'; $dark?: boolean }>`
  position: absolute;
  background: ${p => (p.$dark ? '#a39f94' : '#f3f0ec')};
  ${p => (p.$side === 'top' || p.$side === 'bottom' ? css`left: 50%; width: 24px; height: 12px; margin-left: -12px;` : css`top: 50%; width: 12px; height: 25px; margin-top: -13px;`)}
  ${p => p.$side}: 1px;
  &::after {
    content: '';
    position: absolute;
    ${p => (p.$side === 'top' || p.$side === 'bottom' ? css`left: 2px; right: 2px; top: 5px; border-top: 1px dashed #e3a673;` : css`top: 2px; bottom: 2px; left: 5px; border-left: 1px dashed #e3a673;`)}
  }
`;

const PetPalette = styled.div`
  position: absolute;
  left: 404px;
  top: 142px;
  height: 24px;
  display: flex;
  align-items: center;
  padding: 0 3px 0 14px;
  background: linear-gradient(90deg, #f4f4f4 12px, #d0d0d0 12px, #d0d0d0 13px, #e9e9e9 13px);
  box-shadow: inset 0 0 0 1px #c3c3c3;
`;

const PetButton = styled.button<{ $on?: boolean }>`
  width: 22px;
  height: 22px;
  border-radius: 4px;
  ${p => p.$on && css`background: #b9babd; box-shadow: inset 0 0 0 1px #a5a5a8;`}
`;

const PET = ['M3.500 19v-4L13 10', 'M3.500 19Q4 12 12 10', 'M3.500 19V9q2-3 8-2M6 11l5-2', 'M3.500 18q7 2 7-5M7 5v4M5 7h4', 'M5 18a4.500 4.500 0 1 1 8-4M8 12v4M6 14h4'];

const ViewBar = styled.footer`
  height: 16px;
  flex: none;
  display: flex;
  border-bottom: 1px solid #cdcdcd;
  background: #ebebeb;
`;

const ViewCell = styled.button<{ $w?: number; $dim?: boolean; $center?: boolean }>`
  width: ${p => p.$w ?? 96}px;
  display: flex;
  align-items: center;
  overflow: hidden;
  white-space: nowrap;
  border-right: 1px solid #cfcfcf;
  color: ${p => (p.$dim ? '#a3a3a3' : '#222')};
  span { flex: 1; text-align: ${p => (p.$center ? 'center' : 'left')}; padding: ${p => (p.$center ? '0 6px 0 0' : '0 0 0 5px')}; }
  &:last-child { border-right: 0; }
`;

const IconRun = styled.div`
  width: 57px;
  display: flex;
  align-items: center;
  border-right: 1px solid #cfcfcf;
  color: #333;
`;

const SmallIcon = styled.button<{ $dim?: boolean }>`
  width: 19px;
  flex: none;
  display: grid;
  place-items: center;
  color: ${p => (p.$dim ? '#999' : '#333')};
`;

/* ---------- navigator ---------- */

const Navigator = styled.aside`
  width: 145px;
  flex: none;
  display: flex;
  flex-direction: column;
  border-left: 1px solid #bdbdbd;
`;

const NavTabs = styled.div`
  height: 28px;
  flex: none;
  display: flex;
  align-items: center;
  padding-top: 1px;
`;

const NavTab = styled.button<{ $on?: boolean }>`
  width: 24px;
  height: 24px;
  border-radius: 4px;
  ${p => p.$on && css`background: #b9babd; box-shadow: inset 0 0 0 1px #a5a5a8;`}
`;

const Chooser = styled(BoxButton)`
  margin-right: 13px;
  place-items: center start;
`;

const TreeFrame = styled.div`
  flex: 1;
  min-height: 0;
  display: grid;
  grid-template-columns: 1fr 11px;
  grid-template-rows: 1fr 11px;
  background: #fff;
`;

const TreeScroll = styled.div`
  min-width: 0;
  min-height: 0;
  overflow: hidden;
`;

const Tree = styled.ul`
  height: 300px;
  display: flex;
  flex-direction: column;
`;

const TreeItem = styled.li<{ $depth: number; $on?: boolean }>`
  flex: 1 1 0;
  min-height: 0;
  display: flex;
  align-items: center;
  padding-left: ${p => 5 + p.$depth * 11}px;
  white-space: nowrap;
  overflow: hidden;
  font-weight: ${p => (p.$on ? 700 : 400)};
  background: ${p => (p.$on ? '#d4d4d4' : 'transparent')};
`;

const TriSlot = styled.span`
  width: 4px;
  flex: none;
`;

const ScrollTrack = styled.div<{ $horizontal?: boolean }>`
  padding: 3px 2px;
  background: #f9f9f9;
  border: 0 solid #dedede;
  border-width: ${p => (p.$horizontal ? '1px 0 0 0' : '0 0 0 1px')};
  &::after {
    content: '';
    display: block;
    width: ${p => (p.$horizontal ? '74px' : '6px')};
    height: ${p => (p.$horizontal ? '6px' : '120px')};
    border-radius: 3px;
    background: #bcbcbc;
  }
`;

const NavActions = styled.div`
  height: 34px;
  flex: none;
  display: flex;
  align-items: center;
  justify-content: flex-end;
`;

const NavAction = styled.button`
  width: 24px;
  height: 24px;
`;

const PropRow = styled.div`
  display: flex;
  align-items: center;
  gap: 1px;
  padding: 2px 1px 3px 0;
`;

const PropField = styled.input<{ $w?: number }>`
  ${p => (p.$w ? css`width: ${p.$w}px; flex: none;` : css`flex: 1; min-width: 0;`)}
  height: 16px;
  padding: 0 3px;
  background: #fff;
  border: 1px solid #c2c2c2;
`;

const SettingsButton = styled.button`
  height: 15px;
  margin: 0 1px 8px;
  flex: none;
  border-radius: 4px;
  background: #fff;
  box-shadow: inset 0 0 0 1px #c4c4c4;
`;

const StatusBar = styled.footer`
  height: 19px;
  flex: none;
  display: flex;
  align-items: center;
  justify-content: space-between;
  padding: 0 58px 2px 5px;
`;

const TREE: [number, string, string, boolean?][] = [
  [0, 'project', 'Untitled', true],
  [1, 'storyfill', 'Stories', true],
  [2, 'story', '2. Story'],
  [2, 'story', '1. Story'],
  [2, 'story', '0. Ground Floor'],
  [1, 'section', 'Sections'],
  [1, 'housefill', 'Elevations', true],
  [2, 'house', 'East Elevation (Auto-rebuild Model)'],
  [2, 'house', 'North Elevation (Auto-rebuild Model)'],
  [2, 'house', 'South Elevation (Auto-rebuild Model)'],
  [2, 'house', 'West Elevation (Auto-rebuild Model)'],
  [1, 'interior', 'Interior Elevations'],
  [1, 'worksheet', 'Worksheets'],
  [1, 'detail', 'Details'],
  [1, 'doc3d', '3D Documents'],
  [1, 'roomfill', '3D', true],
  [2, 'roombox', 'Generic Perspective'],
];

/* ---------- dock ---------- */

const Dock = styled.nav`
  height: 42px;
  flex: none;
  margin: 13px 28px 0;
  padding: 0 2px;
  display: flex;
  align-items: center;
  background: linear-gradient(90deg, #404040, #434143 35%, #57364a 42%, #503a47 48%, #454144 56%, #404040);
  border-radius: 4px 4px 0 0;
`;

const DockApp = styled.button<{ $running?: boolean }>`
  flex: 1;
  height: 42px;
  display: flex;
  flex-direction: column;
  align-items: center;
  padding-top: 5px;
  &::after {
    content: '';
    width: 3px;
    height: 3px;
    margin-top: 2px;
    background: ${p => (p.$running ? '#0a0a0a' : 'transparent')};
  }
`;

const DockRule = styled.i`
  width: 17px;
  height: 24px;
  background: linear-gradient(#222 0 0) center / 1px 100% no-repeat;
`;

const Pip = ({ n }: { n: string }) => (
  <g><circle cx="26" cy="5" r="6.500" fill="#d8262c" /><text x="26" y="8" fontSize="8" textAnchor="middle" fill="#fff">{n}</text></g>
);

const Compass = ({ x, y }: { x: number; y: number }) => (
  <g><circle cx={x} cy={y} r="6" fill="#2f86dc" stroke="#dcdcdc" /><path d={`M${x + 4} ${y - 4}L${x + 1} ${y + 1}L${x - 4} ${y + 4}L${x - 1} ${y - 1}z`} fill="#fff" /></g>
);

const petals = ['#f7a11b', '#e9c81d', '#a2c73b', '#4fb77d', '#4f9fd8', '#8176c4', '#c563a5', '#ec5a3e'];

const APPS: [string, boolean, React.ReactNode][] = [
  ['Finder', true, <><rect x="1" y="1" width="28" height="28" rx="2" fill="#e9eff6" /><path d="M1 3a2 2 0 0 1 2-2h13c-3 6-4 11-4 16h4q0 6 1 12H3a2 2 0 0 1-2-2z" fill="#2a9df0" /><path d="M8 9v3M22 9v3M6 20q9 7 18 0M16 1c-3 6-4 11-4 16h4q0 6 1 12" fill="none" stroke="#163a5a" strokeWidth="1.200" /></>],
  ['Siri', false, <><circle cx="15" cy="15" r="13.500" fill="#1c1535" stroke="#cfcfcf" strokeWidth="1.500" /><path d="M4 13q10-10 22-2l-11 5z" fill="#b93c9b" /><path d="M3 16q12 2 24-4-2 12-11 13T3 16z" fill="#2a86b0" /><path d="M15 14l8-6-6 8 8 2-9 0-1 8-2-8-8 2 7-4-5-5z" fill="#e9f6ff" opacity=".9" /></>],
  ['Launchpad', false, <><circle cx="15" cy="15" r="14" fill="#a6abad" stroke="#8b9092" /><path d="M22 6c-5 0-9 4-11 8l-5 2 4 1-2 7 6-4 2 4 2-6c4-3 5-8 4-12z" fill="#3f4447" /><circle cx="18" cy="11" r="2" fill="#a6abad" /></>],
  ['Safari', true, <><circle cx="15" cy="15" r="13.500" fill="#2e8ae0" stroke="#d9dde2" strokeWidth="2" /><circle cx="15" cy="15" r="10.500" fill="none" stroke="#7fbcf5" strokeDasharray="1 2" /><path d="M24 6l-7 11-4-4z" fill="#e2352f" /><path d="M6 24l7-11 4 4z" fill="#f3f3f3" /></>],
  ['Mail', true, <g><g transform="rotate(-6 15 15)"><rect x="4" y="2" width="22" height="27" fill="#eef3f8" stroke="#dfe6ee" strokeWidth="2" strokeDasharray="2 1" /><rect x="6" y="4" width="18" height="23" fill="#4d95dc" /><path d="M8 10l6 4 3-4 1 5 5 5-6-1-6 2 1-5z" fill="#5a4430" /><path d="M12 22l8-4" stroke="#e8c34d" strokeWidth="2" /></g><Pip n="6" /></g>],
  ['Contacts', false, <g transform="rotate(-4 15 15)"><rect x="23" y="6" width="5" height="6" fill="#7fc465" /><rect x="23" y="12" width="5" height="6" fill="#4aa0d8" /><rect x="3" y="1" width="22" height="28" rx="1" fill="#b07c3c" /><path d="M3 3v24l3 2V1z" fill="#8b5f2a" /><circle cx="15" cy="14" r="6" fill="#946630" /><circle cx="15" cy="12" r="2.500" fill="#a87840" /></g>],
  ['Calendar', false, <g transform="rotate(-3 15 15)"><path d="M3 2h24l1 26H4z" fill="#f4f4f4" /><path d="M3 2h24v8H3z" fill="#dc3c36" /><text x="15" y="8" fontSize="6" textAnchor="middle" fill="#fff">NOV</text><text x="15" y="24" fontSize="14" textAnchor="middle" fill="#333">1</text></g>],
  ['Notes', false, <g transform="rotate(-4 15 15)"><path d="M4 1h22v28H4z" fill="#fbfaf3" /><path d="M4 1h22v5H4z" fill="#f4c63a" /><path d="M5 10h20M5 13h20M5 16h20M5 19h20M5 22h20M5 25h20" stroke="#dcdad0" /></g>],
  ['Calculator', false, <g transform="rotate(-4 15 15)"><path d="M4 1h22v28H4z" fill="#bcbcbc" /><path d="M4 1h22v6H4z" fill="#2e2f33" /><path d="M20 7h6v22h-6z" fill="#ee7327" /><path d="M4 12.500h22M4 18h22M4 23.500h22M9.500 7v22M14.500 7v22M20 7v22" stroke="#888" /></g>],
  ['Reminders', false, <g transform="rotate(-4 15 15)"><rect x="4" y="1" width="22" height="28" rx="2" fill="#fafafa" /><path d="M12 7h11M12 12.500h11M12 18h11M12 23.500h11" stroke="#d8d8d8" /><circle cx="8" cy="7" r="2" fill="#e87f33" /><circle cx="8" cy="12.500" r="2" fill="#3b8fe8" /><circle cx="8" cy="18" r="2" fill="#6cbf46" /><circle cx="8" cy="23.500" r="2" fill="#b558d8" /></g>],
  ['Maps', false, <g transform="rotate(-4 15 15)"><path d="M3 2h24v26H3z" fill="#efe9d8" /><path d="M13 2h14v14z" fill="#86cf6e" /><path d="M3 2h4v12H3z" fill="#e48fb0" /><path d="M9 28L12 2M20 2l-4 26M3 14l24-8" stroke="#fff" strokeWidth="2" /><path d="M9 14v14" stroke="#f2c94c" strokeWidth="3" /><circle cx="9" cy="17" r="4.500" fill="#2a76e8" /><path d="M9 14l2 5-2-1-2 1z" fill="#fff" /><circle cx="23" cy="22" r="7" fill="#e9eaec" stroke="#b8b8b8" /><circle cx="23" cy="22" r="3.500" fill="none" stroke="#666" /></g>],
  ['Photos', false, <><circle cx="15" cy="15" r="14" fill="#f7f7f7" />{petals.map((c, i) => <ellipse key={c} cx="15" cy="8.500" rx="3.500" ry="5.500" fill={c} opacity=".85" transform={`rotate(${i * 45} 15 15)`} />)}</>],
  ['Messages', false, <><ellipse cx="14" cy="13" rx="13" ry="11.500" fill="#2d95f3" /><path d="M5 20l-2 7 8-4z" fill="#2d95f3" /><ellipse cx="20" cy="21" rx="8.500" ry="7" fill="#f5f7fa" /><path d="M24 26l4 3-1-5z" fill="#f5f7fa" /><circle cx="16" cy="21" r="1.200" fill="#345c8c" /><circle cx="20" cy="21" r="1.200" fill="#345c8c" /><circle cx="24" cy="21" r="1.200" fill="#345c8c" /></>],
  ['FaceTime', false, <><rect x="1" y="2" width="26" height="25" rx="5" fill="#55dc50" /><rect x="5" y="9" width="11" height="11" rx="2" fill="#fff" /><path d="M17 13l6-4v10l-6-4z" fill="#fff" /><circle cx="22" cy="21" r="7.500" fill="#e9f7e9" /><path d="M18 18c1 4 3 6 7 7l1-3-2-1-1 1c-1 0-2-2-2-3l1-1-1-2z" fill="#45c345" /></>],
  ['News', false, <><circle cx="15" cy="15" r="13.500" fill="#fff" stroke="#e04058" strokeWidth="1.500" /><path d="M7 7h5l11 12v4h-5L7 11z" fill="#e63350" /><path d="M7 14.500l8 8.500H7zM23 15.500L15 7h8z" fill="#e63350" /></>],
  ['Music', false, <><circle cx="15" cy="15" r="13.500" fill="#fbfbfd" stroke="#c96be0" strokeWidth="2" /><path d="M11.500 21V9.500l9-2V19" fill="none" stroke="#c9459c" strokeWidth="2" /><ellipse cx="10" cy="21" rx="2.500" ry="2" fill="#8a5be8" /><ellipse cx="19" cy="19" rx="2.500" ry="2" fill="#e34d80" /></>],
  ['App Store', false, <><circle cx="15" cy="15" r="13.500" fill="#2595ee" stroke="#d5e7f8" strokeWidth="1.500" /><path d="M16 7L9 21M14 7l7 14M6 18h11M20 18h4" stroke="#fff" strokeWidth="2.200" strokeLinecap="round" /><Pip n="1" /></>],
  ['System Preferences', false, <><rect x="1" y="2" width="28" height="27" rx="3" fill="#9b9fa3" /><circle cx="15" cy="15" r="10" fill="#3b3d40" stroke="#222" strokeWidth="3" strokeDasharray="2 1" /><circle cx="15" cy="15" r="7" fill="none" stroke="#c9c9c9" strokeWidth="1.500" /><path d="M15 15V8M15 15l6 4M15 15l-6 4" stroke="#c9c9c9" strokeWidth="1.500" /><Pip n="1" /></>],
  ['QuickTime Player', true, <><circle cx="15" cy="15" r="11.500" fill="none" stroke="#5a616b" strokeWidth="5" /><circle cx="15" cy="15" r="8.500" fill="#2d8cf0" /><circle cx="14" cy="17" r="4" fill="#7fc4ff" opacity=".7" /><path d="M19 19l4-2 6 9-2 3h-4z" fill="#343941" /></>],
  ['AutoCAD', false, <><rect x="-1" y="-2" width="33" height="34" fill="#f2dcd9" stroke="#e9c9c5" /><path d="M5 26L11 3h8l6 23h-6l-2-6h-5l-2 6zM13 15h3l-1-6z" fill="#b3202c" fillRule="evenodd" /></>],
];

const APPS2: [string, boolean, React.ReactNode][] = [
  ['ARCHICAD', true, <><rect x="0" y="1" width="30" height="28" fill="#e9ecf4" /><path d="M0 1h24v6H0z" fill="#a9b0c8" /><path d="M12 8h10l7 21H17z" fill="#2b33d8" /><path d="M1 29C2 19 5 12 11 9l3 3c-5 4-6 9-7 17z" fill="#5a63ea" /><text x="2" y="7" fontSize="6" fontWeight="700" fill="#111">Untitled</text></>],
  ['Illustrator', true, <><rect x="1" y="1" width="28" height="28" fill="#2b1604" stroke="#d3703a" strokeWidth="1.500" /><text x="15" y="20" fontSize="14" textAnchor="middle" fill="#ee7c35">Ai</text></>],
  ['Excel', true, <><rect x="8" y="2" width="21" height="26" rx="1" fill="#1f8a4c" /><path d="M18 2h11v9H18z" fill="#39c07c" /><path d="M8 11h21v9H8z" fill="#177c42" /><path d="M18 20h11v8H18z" fill="#125c33" /><rect x="1" y="8" width="14" height="14" rx="1" fill="#14713c" /><text x="8" y="19" fontSize="11" fontWeight="600" textAnchor="middle" fill="#fff">X</text></>],
  ['Word', true, <><rect x="8" y="2" width="21" height="26" rx="1" fill="#2a6fd0" /><path d="M8 2h21v7H8z" fill="#43a1ec" /><path d="M8 20h21v8H8z" fill="#173f8a" /><rect x="1" y="8" width="14" height="14" rx="1" fill="#1b55b0" /><text x="8" y="19" fontSize="11" fontWeight="600" textAnchor="middle" fill="#fff">W</text></>],
  ['LINE', true, <><rect x="1" y="1" width="28" height="28" rx="5" fill="#58c31c" /><ellipse cx="15" cy="14" rx="10.500" ry="9" fill="#fff" /><path d="M13 21l3 5 6-7z" fill="#fff" /><text x="15" y="16" fontSize="6" fontWeight="700" textAnchor="middle" fill="#4fb51a">LINE</text></>],
];

const WINDOWS: [string, boolean, React.ReactNode][] = [
  ['Archive window', false, <><rect x="-1" y="4" width="32" height="22" fill="#33363b" stroke="#55585e" /><path d="M-1 4h32v2h-32z" fill="#6b7078" /><path d="M5 10h8v10H5zM15 10h8v10h-8z" fill="#44483f" /><Compass x={26} y={25} /></>],
  ['Gallery window', false, <><rect x="-1" y="5" width="32" height="21" fill="#eee" /><path d="M1 9h8v6H1zM11 8h8v7h-8zM21 9h8v6h-8zM1 17h8v6H1zM11 17h8v6h-8z" fill="#6d675c" /><path d="M3 11h4v3H3zM13 18h5v3h-5z" fill="#8fa4c4" /><Compass x={26} y={25} /></>],
  ['Mail window', false, <><rect x="-1" y="5" width="32" height="21" fill="#dfe9ee" /><path d="M-1 5h12v21H-1z" fill="#f4f6f8" /><path d="M12 9h18v10H12z" fill="#17627c" /><path d="M13 20h16v4H13z" fill="#5cb84a" /><path d="M1 9h8M1 12h8M1 15h8M1 18h8" stroke="#6aa5c8" /><rect x="21" y="20" width="8" height="10" fill="#5aa2e0" stroke="#f0f0f0" /></>],
  ['Article window', false, <><rect x="-1" y="5" width="32" height="21" fill="#f3efee" /><path d="M0 5h30v3H0z" fill="#d9c9c7" /><path d="M3 10h24v9H3z" fill="#4b3a38" /><path d="M3 10h8v9H3z" fill="#c7a9a0" /><Compass x={26} y={25} /></>],
  ['Trash', false, <><path d="M4 4h22l-3 25q-8 2-16 0z" fill="#d9dbdd" stroke="#b5b8ba" /><path d="M5 4l3-3 4 2 3-3 4 3 4-2 2 4q-10 3-20-1z" fill="#f3f3f3" stroke="#777" /><path d="M9 9l2 17M21 9l-2 17M15 9v17" stroke="#c4c7c9" /></>],
];

const AppIcon = ({ children }: { children: React.ReactNode }) => (
  <svg width="30" height="30" viewBox="0 0 30 30" overflow="visible" aria-hidden="true">{children}</svg>
);

const Apps = ({ list }: { list: [string, boolean, React.ReactNode][] }) => (
  <>{list.map(([name, running, art]) => <DockApp key={name} $running={running} aria-label={name}><AppIcon>{art}</AppIcon></DockApp>)}</>
);

const MenuGlyph = ({ children, w = 16 }: { children: React.ReactNode; w?: number }) => (
  <svg width={w} height="16" viewBox={`0 0 ${w} 16`} fill="none" stroke="#111" aria-hidden="true">{children}</svg>
);

export default function App() {
  return (
    <Desktop>
      <Global />
      <MenuBar>
        <svg width="14" height="14" viewBox="0 0 14 14" fill="#111" aria-label="Apple menu"><path d="M9.200 0.500c.2 1.400-1 2.700-2.300 2.700C6.700 1.900 7.900.7 9.200.5zM7 4c.6 0 1.300-.6 2.500-.6 1 0 1.900.5 2.400 1.300-2 1.200-1.700 4.100.4 4.900-.6 1.600-1.700 3.400-2.900 3.400-.9 0-1.200-.5-2.300-.5s-1.500.5-2.300.5C3.200 13 1.500 10 1.500 7.500c0-2.700 1.600-4 3.200-4C5.800 3.500 6.400 4 7 4z" /></svg>
        <MenuItem $bold>ARCHICAD</MenuItem>
        {['File', 'Edit', 'View', 'Design', 'Document', 'Options', 'Window', 'Help'].map(m => <MenuItem key={m}>{m}</MenuItem>)}
        <MenuExtras>
          <MenuGlyph><circle cx="8" cy="8" r="5.500" /><rect x="5.500" y="5.500" width="5" height="5" fill="#111" /></MenuGlyph>
          <MenuGlyph><path d="M4.500 2L8 4.200 4.500 6.500 1 4.200zM11.500 2L15 4.200 11.500 6.500 8 4.200zM4.500 6.500L8 8.800 4.500 11 1 8.800zM11.500 6.500L15 8.800 11.500 11 8 8.800zM8 10l3 2-3 2-3-2z" fill="#111" stroke="none" /></MenuGlyph>
          <MenuGlyph><ellipse cx="8" cy="7" rx="7" ry="5.500" fill="#73767a" stroke="none" /><path d="M6 12l3 3 3-5z" fill="#73767a" stroke="none" /><text x="8" y="9" fontSize="5" fontWeight="700" textAnchor="middle" fill="#ddd" stroke="none">LINE</text></MenuGlyph>
          <MenuGlyph><circle cx="10" cy="8" r="4.500" stroke="#444" strokeWidth="1.500" /><circle cx="5.500" cy="9" r="3.500" stroke="#444" strokeWidth="1.500" /><circle cx="10" cy="8" r="2" stroke="#444" /></MenuGlyph>
          <MenuGlyph><path d="M4 13a3.500 3.500 0 0 1 0-7 4.500 4.500 0 0 1 8.500 1A3 3 0 0 1 13 13z" fill="#111" /><path d="M8.500 6v3.500M8.500 10.500v1.500" stroke="#a4a4a4" strokeWidth="1.500" /></MenuGlyph>
          <MenuGlyph><path d="M1.500 6.500q6.500-6 13 0M3.500 9q4.500-4 9 0M5.500 11q2.500-2 5 0" strokeWidth="1.700" /><circle cx="8" cy="12.500" r="1.200" fill="#111" stroke="none" /></MenuGlyph>
          <Battery>
            100%
            <MenuGlyph w={19}><rect x="1.500" y="4.500" width="14" height="8" rx="1" /><path d="M3 6h11v5H3z" fill="#111" stroke="none" /><path d="M17.500 7v3" /><path d="M10 4l-4 5h3l-1 4 4-5H9z" fill="#a4a4a4" stroke="none" /></MenuGlyph>
          </Battery>
          <InputSource>A</InputSource>
          <Clock>Fri 3:49 PM</Clock>
          <MenuGlyph><circle cx="7" cy="7" r="4" strokeWidth="1.200" /><path d="M10 10l4 4" strokeWidth="1.500" /></MenuGlyph>
          <SiriSlot><MenuGlyph><circle cx="8" cy="8" r="6.500" fill="#28284a" stroke="none" /><path d="M3 9q5-7 10-2-2 6-5 6T3 9z" fill="#4d8ed0" stroke="none" /><path d="M4 7q4-3 8-1l-4 3z" fill="#c4669e" stroke="none" /></MenuGlyph></SiriSlot>
          <MenuGlyph><path d="M1 4.500h2M1 8.500h2M1 12.500h2M4.500 4.500h11M4.500 8.500h9M4.500 12.500h11" strokeWidth="1.500" /></MenuGlyph>
        </MenuExtras>
      </MenuBar>

      <Window>
        <TitleBar>
          <Lights><Light $c="#e0443e" aria-label="Close" /><Light $c="#eab23a" aria-label="Minimise" /><Light $c="#5bc84b" aria-label="Zoom" /></Lights>
          <svg width="10" height="12" viewBox="0 0 10 12" aria-hidden="true"><path d="M1 0.500h5l3 3v8H1z" fill="#fff" stroke="#bbb" /><path d="M2 2h3v3H2z" fill="#3a3fe0" /><path d="M3 7h4M3 9h4" stroke="#aab" /></svg>
          Untitled
        </TitleBar>

        <ToolbarArea>
          {ROWS.map((strips, r) => (
            <ToolbarRow key={r}>
              {strips.map((s, i) => (
                <Strip key={i}><Grip />{s.split(' ').map((t, j) => <Tool key={j} token={t} />)}</Strip>
              ))}
            </ToolbarRow>
          ))}
        </ToolbarArea>

        <InfoBar>
          <InfoCell $basis={155} $gap={1} $flush>
            <Grip /><SettingsLabel>Default Settings</SettingsLabel>
            <BoxButton $w={31} aria-label="Polyline defaults"><GlyphSvg name="poly" /></BoxButton>
            <BoxButton $w={7} aria-label="Favourites" />
          </InfoCell>
          <InfoCell><LayerPicker><GlyphSvg name="eye" size={15} />2D Drafting - General</LayerPicker></InfoCell>
          <InfoCell>
            <BoxButton $on aria-label="Polygonal"><GlyphSvg name="polyfill" /></BoxButton>
            <BoxButton $flat aria-label="Rectangular"><GlyphSvg name="rect" /></BoxButton>
            <BoxButton $flat aria-label="Rotated rectangular"><GlyphSvg name="rotrect" /></BoxButton>
          </InfoCell>
          <InfoCell><LineTypePicker>Solid Line</LineTypePicker></InfoCell>
          <InfoCell $gap={4} $end>
            <GlyphSvg name="penflat" />
            <Field aria-label="Pen" defaultValue="62" />
            <PenSwatch aria-label="Pen colour" />
          </InfoCell>
          <InfoCell>
            <SelectWrap>
              <Select aria-label="Line category" defaultValue="Drafting Line"><option>Drafting Line</option><option>Cut Line</option></Select>
              <Stepper><svg width="7" height="10" viewBox="0 0 7 10" fill="none" stroke="#fff" aria-hidden="true"><path d="M1 4l2.500-2.500L6 4M1 6l2.500 2.500L6 6" /></svg></Stepper>
            </SelectWrap>
          </InfoCell>
          <InfoCell>
            {['seg0', 'seg1', 'seg2', 'seg3'].map(n => <BoxButton key={n} $on={n === 'seg0'} $flat={n !== 'seg0'} aria-label={n}><GlyphSvg name={n} /></BoxButton>)}
          </InfoCell>
          <InfoCell $basis={113} $gap={5}>
            <BoxButton $dim aria-label="Arrowhead"><GlyphSvg name="arrowR" /></BoxButton>
            <svg width="25" height="32" viewBox="0 0 25 32" fill="none" stroke="#888" aria-hidden="true">
              <path d="M2 8.500h10M9 5l3.500 3.500L9 12M22.500 4v9M20.500 6l2-2 2 2M20.500 11l2 2 2-2M14 17l3 5 3-5M17 22v4" />
              <path d="M14.500 4v9M14.500 4.500h5M14.500 12.500h5M4 27.500h13" strokeDasharray="2 1" />
              <path d="M17 24.500l4 3-4 3" />
            </svg>
            <FieldStack><Field $dim aria-label="Arrow size" defaultValue="2.00" /><Field $dim aria-label="Arrow pen" defaultValue="1" /></FieldStack>
          </InfoCell>
        </InfoBar>

        <Body>
          <Toolbox>
            <PanelGrip />
            <Palette items={['Arrow', 'Marquee']} />
            <GroupHeader><Tri />Design</GroupHeader>
            <Palette items={DESIGN} />
            <GroupHeader><Tri />Document</GroupHeader>
            <Palette items={DOCUMENT} />
            <GroupHeader $closed><Tri closed />More</GroupHeader>
          </Toolbox>

          <Stage>
            <Tabs>
              <Tab><GlyphSvg name="story" size={22} />[0. Ground Floor]</Tab>
              <Tab><GlyphSvg name="roombox" size={22} />[3D / All]</Tab>
              <Tab $on><GlyphSvg name="house" size={22} />[South Elevation]</Tab>
              <TabMenu aria-label="Tab overview"><GlyphSvg name="navhouse" size={24} /></TabMenu>
            </Tabs>
            <Viewport>
              <Drawing viewBox="0 0 850 392" preserveAspectRatio="xMinYMin slice">
                <path d="M223.500 322.500H569.500V149.500H850V375L816 392H223.500z" fill="#9fa096" stroke="#9a96c0" />
                <path d="M199.500 311h13v82h-13zM545.500 138h12v145h-12z" fill="#c49b62" stroke="#9a8fb5" />
                <path d="M557.500 282.500H197.500a14 14.250 0 0 0 0 28.500H557.500zM851 109.500H543.500a14 14.500 0 0 0 0 29H851z" fill="#c49b62" stroke="#8f87b4" />
                <path d="M183 282L750 0" stroke="#222" strokeWidth="1.500" />
                <path d="M209 287l2-5 6-6q2-1 3 1 0 1-1 2l-6 6z" fill="#111" />
              </Drawing>
              <EdgeMark $side="top" /><EdgeMark $side="left" /><EdgeMark $side="right" $dark /><EdgeMark $side="bottom" $dark />
              <PetPalette>
                {PET.map((d, i) => (
                  <PetButton key={i} $on={i === 0} aria-label={`Segment type ${i + 1}`}>
                    <svg width="22" height="22" viewBox="0 0 22 22" fill="none" stroke="#222" aria-hidden="true"><path d={d} /><path d="M13.500 9l5-5" strokeWidth="2.500" /><path d="M12 11l2-2" /></svg>
                  </PetButton>
                ))}
              </PetPalette>
            </Viewport>
            <ViewBar>
              <IconRun>
                <SmallIcon aria-label="Previous zoom"><GlyphSvg name="zoomprev" size={21} /></SmallIcon>
                <SmallIcon $dim aria-label="Next zoom"><GlyphSvg name="zoomnext" size={21} /></SmallIcon>
                <SmallIcon aria-label="Zoom in"><GlyphSvg name="zoomin" size={21} /></SmallIcon>
              </IconRun>
              <ViewCell $dim $center><SmallIcon as="i"><GlyphSvg name="zoomfit" size={21} /></SmallIcon><span>2858%</span></ViewCell>
              <ViewCell $dim $center><GlyphSvg name="rotview" size={21} /><span>0.00°</span></ViewCell>
              <ViewCell $center><GlyphSvg name="scale" size={21} /><span>1:100</span></ViewCell>
              <ViewCell><GlyphSvg name="layersd" size={21} /><span>02 Drafting</span></ViewCell>
              <ViewCell><GlyphSvg name="hatchbox" size={21} /><span>Entire Model</span></ViewCell>
              <ViewCell><GlyphSvg name="pen" size={21} /><span>03 Architect...</span></ViewCell>
              <ViewCell><GlyphSvg name="mvo" size={21} /><span>03 Building...</span></ViewCell>
              <ViewCell $w={120}><GlyphSvg name="override" size={21} /><span>No Overrides</span></ViewCell>
            </ViewBar>
          </Stage>

          <Navigator>
            <PanelGrip />
            <NavTabs>
              <Chooser aria-label="Project chooser"><GlyphSvg name="navtree" /></Chooser>
              <NavTab $on aria-label="Project map"><GlyphSvg name="project" /></NavTab>
              <NavTab aria-label="View map"><GlyphSvg name="story" /></NavTab>
              <NavTab aria-label="Layout book"><GlyphSvg name="navbooks" /></NavTab>
            </NavTabs>
            <TreeFrame>
              <TreeScroll>
                <Tree>
                  {TREE.map(([depth, icon, text, open], i) => (
                    <TreeItem key={text} $depth={depth} $on={i === 9}>
                      <TriSlot>{open && <Tri />}</TriSlot>
                      <GlyphSvg name={icon} />{text}
                    </TreeItem>
                  ))}
                </Tree>
              </TreeScroll>
              <ScrollTrack />
              <ScrollTrack $horizontal />
            </TreeFrame>
            <NavActions>
              <NavAction aria-label="View settings"><GlyphSvg name="viewsettings" /></NavAction>
              <NavAction aria-label="New view"><GlyphSvg name="newview" /></NavAction>
              <NavAction aria-label="Delete"><svg width="24" height="24" viewBox="0 0 24 24" stroke="#c8202b" strokeWidth="2"><path d="M7 6.500l10 11M17 6.500l-10 11" /></svg></NavAction>
            </NavActions>
            <GroupHeader><Tri />Properties</GroupHeader>
            <PropRow>
              <GlyphSvg name="house" size={16} />
              <PropField $w={30} aria-label="View ID" />
              <PropField aria-label="View name" defaultValue="South Elevation" />
            </PropRow>
            <SettingsButton>Settings...</SettingsButton>
          </Navigator>
        </Body>
        <StatusBar>
          <span>Enter Next Node of Polyline.</span>
          <GlyphSvg name="windows" />
        </StatusBar>
      </Window>

      <Dock>
        <Apps list={APPS} />
        <DockRule />
        <Apps list={APPS2} />
        <DockRule />
        <Apps list={WINDOWS} />
      </Dock>
    </Desktop>
  );
}
